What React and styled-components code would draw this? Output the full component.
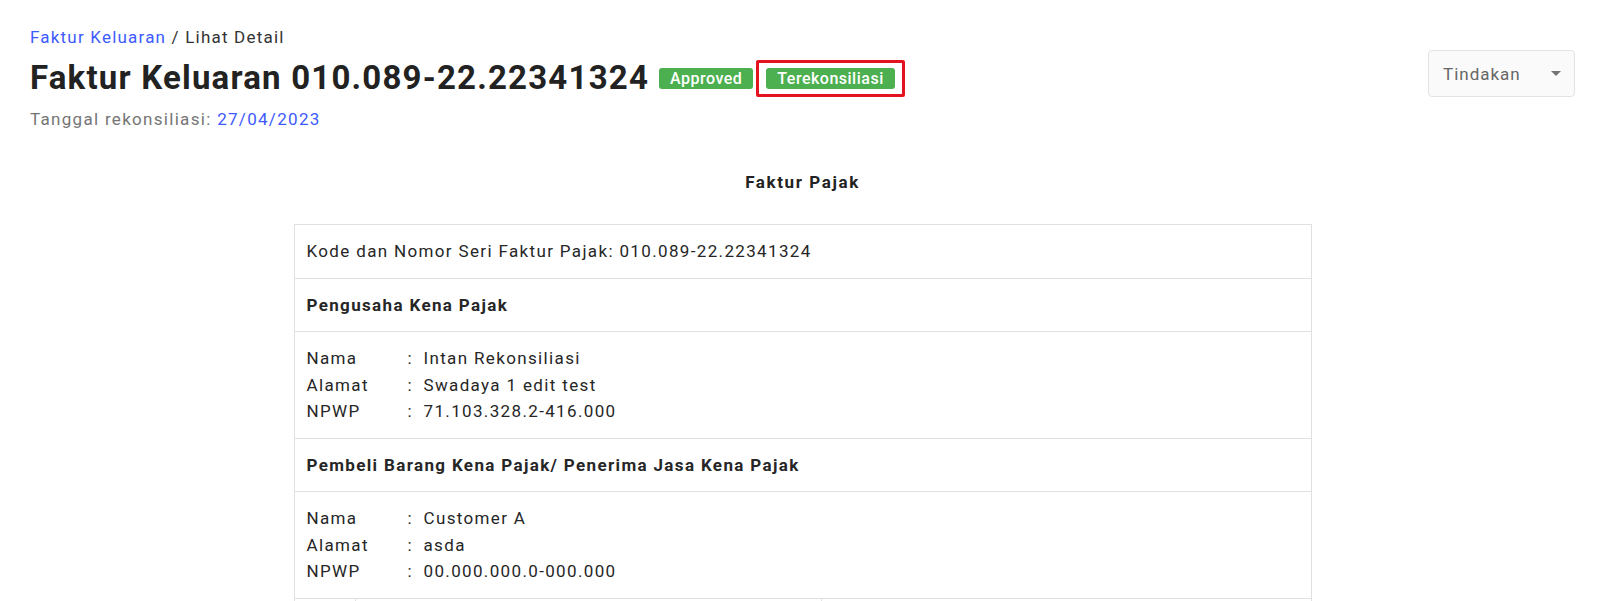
import React from 'react';
import styled, { createGlobalStyle } from 'styled-components';

const GlobalStyle = createGlobalStyle`
    body {
        margin: 0;
        background: #fff;
        font-family: Roboto, "Liberation Sans", sans-serif;
        color: #212121;
    }
`

const Page = styled.div`
    padding: 25px 25px 0 30px;
`

const Header = styled.div`
    display: flex;
    justify-content: space-between;
    align-items: flex-start;
`

const HeaderMain = styled.div`
    display: flex;
    flex-direction: column;
`

const Breadcrumb = styled.div`
    font-size: 17px;
    line-height: 24px;
    letter-spacing: 1.2px;
    color: #333;

    a {
        color: #3d5afe;
        text-decoration: none;
    }
`

const TitleRow = styled.div`
    display: flex;
    align-items: center;
    margin-top: 9px;
    height: 40px;
`

const Title = styled.h1`
    margin: 0 10px 0 0;
    font-size: 33px;
    line-height: 40px;
    font-weight: 700;
    color: #222;
    letter-spacing: 1.2px;
`

const Badge = styled.span`
    display: inline-flex;
    align-items: center;
    height: 21px;
    padding: 0 11px;
    border-radius: 3px;
    background: #4caf50;
    color: #fff;
    font-size: 16px;
    font-weight: 500;
    letter-spacing: 0.5px;
    margin-right: ${p => p.$gap || 0}px;
`

const Highlight = styled.span`
    display: inline-flex;
    padding: 5px 7px;
    border: 3px solid #e3131f;
    border-radius: 2px;
`

const SubTitle = styled.div`
    margin-top: 9px;
    font-size: 17px;
    line-height: 24px;
    letter-spacing: 1.3px;
    color: #757575;

    span {
        color: #3d5afe;
    }
`

const ActionButton = styled.button`
    margin-top: 25px;
    width: 147px;
    height: 47px;
    display: flex;
    align-items: center;
    justify-content: space-between;
    padding: 0 13px 0 14px;
    background: #fafafa;
    border: 1px solid #e3e3e3;
    border-radius: 4px;
    font-family: inherit;
    font-size: 17px;
    letter-spacing: 1px;
    color: #666;
    cursor: pointer;
`

const Caret = styled.span`
    width: 0;
    height: 0;
    border-left: 5px solid transparent;
    border-right: 5px solid transparent;
    border-top: 5px solid #757575;
`

const DocTitle = styled.div`
    margin-top: 39px;
    text-align: center;
    font-size: 17px;
    line-height: 24px;
    font-weight: 700;
    letter-spacing: 1.6px;
    color: #222;
`

const Table = styled.div`
    width: 1016px;
    margin: 30px auto 0;
    border: 1px solid #e0e0e0;
    border-bottom: none;
    font-size: 17px;
    letter-spacing: 1.35px;
    color: #262626;
`

const Row = styled.div`
    padding: 13px 12px;
    line-height: 26.5px;
    border-bottom: 1px solid #e0e0e0;
    font-weight: ${p => p.$head ? 700 : 400};
`

const InfoLine = styled.div`
    display: grid;
    grid-template-columns: 101px 16px 1fr;
`

const GridRow = styled.div`
    display: grid;
    grid-template-columns: 60px 466px 1fr;
    border-bottom: 1px solid #e0e0e0;
    line-height: 26.5px;
    font-weight: 700;

    div {
        padding: 13px 12px;
    }
    div + div {
        border-left: 1px solid #e0e0e0;
    }
`

const Info = ({ rows }) => <Row>
    {rows.map(([label, value]) => <InfoLine key={label}>
        <span>{label}</span>
        <span>:</span>
        <span>{value}</span>
    </InfoLine>)}
</Row>

export default function App() {
    return <Page>
        <GlobalStyle />
        <Header>
            <HeaderMain>
                <Breadcrumb><a href="#">Faktur Keluaran</a> / Lihat Detail</Breadcrumb>
                <TitleRow>
                    <Title>Faktur Keluaran 010.089-22.22341324</Title>
                    <Badge $gap={3}>Approved</Badge>
                    <Highlight>
                        <Badge>Terekonsiliasi</Badge>
                    </Highlight>
                </TitleRow>
                <SubTitle>Tanggal rekonsiliasi: <span>27/04/2023</span></SubTitle>
            </HeaderMain>
            <ActionButton>Tindakan <Caret /></ActionButton>
        </Header>
        <DocTitle>Faktur Pajak</DocTitle>
        <Table>
            <Row>Kode dan Nomor Seri Faktur Pajak: 010.089-22.22341324</Row>
            <Row $head>Pengusaha Kena Pajak</Row>
            <Info rows={[
                ['Nama', 'Intan Rekonsiliasi'],
                ['Alamat', 'Swadaya 1 edit test'],
                ['NPWP', '71.103.328.2-416.000'],
            ]} />
            <Row $head>Pembeli Barang Kena Pajak/ Penerima Jasa Kena Pajak</Row>
            <Info rows={[
                ['Nama', 'Customer A'],
                ['Alamat', 'asda'],
                ['NPWP', '00.000.000.0-000.000'],
            ]} />
            <GridRow>
                <div>No.</div>
                <div>Nama Barang Kena Pajak / Jasa Kena Pajak</div>
                <div>Harga Jual/Penggantian/Uang Muka/Termin (Rp)</div>
            </GridRow>
        </Table>
    </Page>
}
